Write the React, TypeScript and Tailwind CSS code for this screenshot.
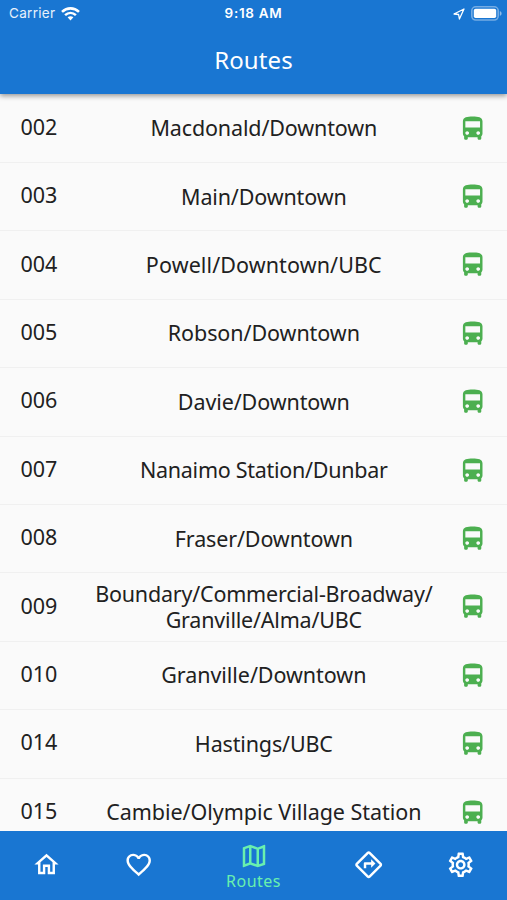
import {
  MdDirectionsBus,
  MdFavoriteBorder,
  MdOutlineDirections,
  MdOutlineHome,
  MdOutlineMap,
  MdOutlineSettings,
} from "react-icons/md";

const routes = [
  { id: "002", name: "Macdonald/Downtown", tracking: "tracking-[-0.14px]" },
  { id: "003", name: "Main/Downtown", tracking: "tracking-[-0.14px]" },
  { id: "004", name: "Powell/Downtown/UBC", tracking: "tracking-[0.1px]" },
  { id: "005", name: "Robson/Downtown", tracking: "tracking-[-0.07px]" },
  { id: "006", name: "Davie/Downtown", tracking: "tracking-[-0.1px]" },
  { id: "007", name: "Nanaimo Station/Dunbar", tracking: "tracking-[-0.27px]" },
  { id: "008", name: "Fraser/Downtown", tracking: "tracking-[-0.13px]" },
  { id: "009", name: "Boundary/Commercial-Broadway/\nGranville/Alma/UBC", tracking: "tracking-[-0.2px]" },
  { id: "010", name: "Granville/Downtown", tracking: "tracking-[-0.05px]" },
  { id: "014", name: "Hastings/UBC", tracking: "tracking-[-0.15px]" },
  { id: "015", name: "Cambie/Olympic Village Station", tracking: "tracking-[-0.04px]" },
];

function StatusBar() {
  return (
    <div className="grid h-[27px] grid-cols-3 items-center pt-px font-['Inter','Liberation_Sans',sans-serif] text-[13.5px] leading-none text-white">
      <div className="flex items-center gap-[6px] pl-[9px]">
        <span className="tracking-[0.3px] text-white/90">Carrier</span>
        <svg width="19" height="14" viewBox="0 0 19 14" fill="none" stroke="currentColor" strokeWidth="2.6" className="-mt-px">
          <path d="M1 4.9C6 .2 13 .2 18 4.9" />
          <path d="M4.1 8.1c3.2-2.9 7.6-2.9 10.8 0" />
          <path d="M6.6 10.2c1.8-1.4 4-1.4 5.8 0L9.5 13.5z" fill="currentColor" stroke="none" />
        </svg>
      </div>
      <span className="text-center font-semibold tracking-[0.7px]">9:18 AM</span>
      <div className="-mt-px flex items-center justify-end gap-[6px] pr-[5px]">
        <svg width="12" height="12" viewBox="0 0 12 12" fill="none" stroke="currentColor" strokeWidth="1.3" strokeLinejoin="round">
          <path d="M11 1L1 6l4.6.5L6.4 11z" />
        </svg>
        <svg width="31" height="15" viewBox="0 0 31 15">
          <rect x="0.8" y="0.8" width="26.4" height="13.2" rx="4" fill="none" stroke="white" strokeOpacity=".4" strokeWidth="1.6" />
          <rect x="2.8" y="2.8" width="22.4" height="9.2" rx="1.8" fill="white" />
          <path d="M28.8 5v4.8c1.2-.5 1.8-1.4 1.8-2.4s-.6-1.9-1.8-2.4z" fill="white" fillOpacity=".5" />
        </svg>
      </div>
    </div>
  );
}

export default function App() {
  return (
    <div className="flex h-[900px] w-[507px] flex-col overflow-hidden bg-[#fafafa] font-['Noto_Sans','Open_Sans',sans-serif]">
      <header className="z-10 h-[94px] shrink-0 bg-[#1976d2] shadow-[0_2px_5px_rgba(0,0,0,0.4)]">
        <StatusBar />
        <h1 className="pt-[17px] text-center text-[24px] leading-8 tracking-[0.1px] text-white">Routes</h1>
      </header>

      {/* Route list */}
      <ul className="min-h-0 flex-1 overflow-hidden pt-[0.6px]">
        {routes.map((route) => (
          <li
            key={route.id}
            className="flex h-[68.4px] items-center border-b border-[#f0f0f0] pr-[20px] pl-[20.5px] text-[21.5px] leading-[26px] text-[#212121]"
          >
            <span className="w-[49.5px] shrink-0 pb-[3px]">{route.id}</span>
            <p className={`flex-1 text-center whitespace-pre ${route.tracking}`}>{route.name}</p>
            <MdDirectionsBus className="size-[29.4px] shrink-0 text-[#4caf50]" />
          </li>
        ))}
      </ul>

      {/* Bottom navigation */}
      <nav className="z-10 flex h-[69px] shrink-0 items-center bg-[#1976d2] text-white">
        <a className="flex w-[93px] justify-center">
          <MdOutlineHome className="mb-[2px] size-[29px]" />
        </a>
        <a className="flex w-[92px] justify-center">
          <MdFavoriteBorder className="mb-[2px] size-[29.4px]" />
        </a>
        <a className="flex w-[137px] flex-col items-center text-[#69f0ae]">
          <MdOutlineMap className="size-[30px]" />
          <span className="text-[16px] leading-5 tracking-[0.5px]">Routes</span>
        </a>
        <a className="flex w-[93px] justify-center">
          <MdOutlineDirections className="mb-px size-[29.4px]" />
        </a>
        <a className="flex w-[92px] justify-center">
          <MdOutlineSettings className="mb-px size-[29.4px]" />
        </a>
      </nav>
    </div>
  );
}
